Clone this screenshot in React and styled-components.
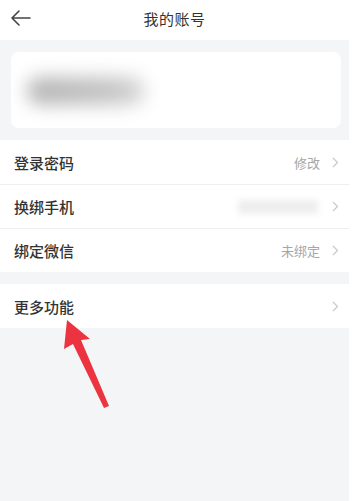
import React from "react";
import styled, { createGlobalStyle } from "styled-components";

const Global = createGlobalStyle`
  html, body { margin: 0; padding: 0; background: #ffffff; }
  body { font-family: "Noto Sans CJK SC", "Noto Sans", sans-serif; }
`;

const Screen = styled.div`
  width: 349px;
  height: 501px;
  background: #f4f5f7;
  display: flex;
  flex-direction: column;
  position: relative;
  overflow: hidden;
`;

const Header = styled.header`
  height: 40px;
  background: #ffffff;
  display: grid;
  grid-template-columns: 60px 1fr 60px;
  align-items: center;
  padding-bottom: 4px;
  box-sizing: border-box;
`;

const BackButton = styled.div`
  display: flex;
  align-items: center;
  padding-left: 9px;
  height: 100%;
`;

const Title = styled.h1`
  margin: 0;
  text-align: center;
  font-size: 15px;
  font-weight: 400;
  color: #333333;
  letter-spacing: 0.5px;
`;

const CardWrap = styled.div`
  padding: 12px 8px 12px 11px;
`;

const Card = styled.div`
  height: 76px;
  background: #ffffff;
  border-radius: 8px;
  display: flex;
  align-items: center;
  padding-left: 16px;
  overflow: hidden;
`;

const BlurName = styled.div`
  width: 118px;
  height: 28px;
  border-radius: 14px;
  background: linear-gradient(90deg, #b5b5b5, #c4c4c4 70%, #d8d8d8);
  filter: blur(9px);
  margin-top: 2px;
`;

const Group = styled.div`
  background: #ffffff;
  margin-bottom: ${(p) => p.$gap || 0}px;
`;

const Row = styled.div`
  height: 44px;
  display: flex;
  align-items: center;
  padding: 0 10px 0 14px;
  border-top: ${(p) => (p.$divider ? "1px solid #eeeeee" : "none")};
  box-sizing: border-box;
`;

const Label = styled.span`
  flex: 1;
  font-size: 15px;
  font-weight: 500;
  color: #333333;
`;

const Value = styled.span`
  font-size: 13px;
  color: #a6a6a6;
  margin-right: 12px;
`;

const BlurValue = styled.div`
  width: 80px;
  height: 14px;
  background: #eeeeee;
  filter: blur(3px);
  margin-right: 14px;
`;

const Chevron = () => (
  <svg width="7" height="11" viewBox="0 0 7 11">
    <path d="M1 1 L5.5 5.5 L1 10" fill="none" stroke="#c8c8c8" strokeWidth="1.2" />
  </svg>
);

const Pointer = styled.svg`
  position: absolute;
  left: 55px;
  top: 315px;
`;

export default function App() {
  return (
    <>
      <Global />
      <Screen>
        <Header>
          <BackButton>
            <svg width="24" height="18" viewBox="0 0 24 18">
              <path d="M21 9 H3 M10 2 L3 9 L10 16" fill="none" stroke="#444" strokeWidth="1.6" strokeLinecap="round" strokeLinejoin="round" />
            </svg>
          </BackButton>
          <Title>我的账号</Title>
          <div />
        </Header>
        <CardWrap>
          <Card>
            <BlurName />
          </Card>
        </CardWrap>
        <Group $gap={12}>
          <Row>
            <Label>登录密码</Label>
            <Value>修改</Value>
            <Chevron />
          </Row>
          <Row $divider>
            <Label>换绑手机</Label>
            <BlurValue />
            <Chevron />
          </Row>
          <Row $divider>
            <Label>绑定微信</Label>
            <Value>未绑定</Value>
            <Chevron />
          </Row>
        </Group>
        <Group>
          <Row>
            <Label>更多功能</Label>
            <Chevron />
          </Row>
        </Group>
        <Pointer width="60" height="100" viewBox="55 315 60 100">
          <polygon points="67,320 64,349 73,344 104,408 109,406 81,340 90,339" fill="#ec3340" />
        </Pointer>
      </Screen>
    </>
  );
}
